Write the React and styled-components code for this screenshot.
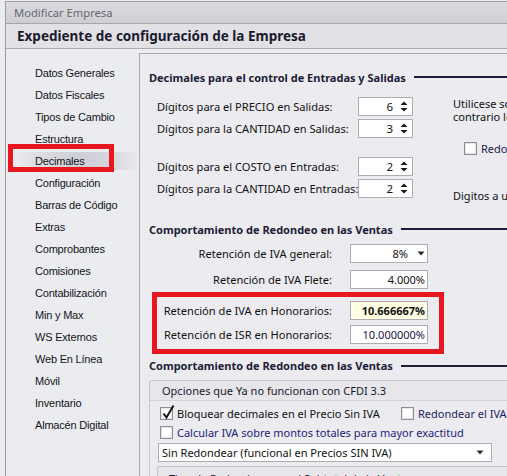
import React from 'react'
import styled, { createGlobalStyle } from 'styled-components'

const UI = "'Noto Sans', 'Liberation Sans', sans-serif"
const NAV = "'Liberation Sans', Arial, sans-serif"

const navItems = [
  'Datos Generales',
  'Datos Fiscales',
  'Tipos de Cambio',
  'Estructura',
  'Decimales',
  'Configuración',
  'Barras de Código',
  'Extras',
  'Comprobantes',
  'Comisiones',
  'Contabilización',
  'Min y Max',
  'WS Externos',
  'Web En Línea',
  'Móvil',
  'Inventario',
  'Almacén Digital',
]

const digitGroups = [
  [
    { label: 'Dígitos para el PRECIO en Salidas:', value: 6 },
    { label: 'Dígitos para la CANTIDAD en Salidas:', value: 3 },
  ],
  [
    { label: 'Dígitos para el COSTO en Entradas:', value: 2 },
    { label: 'Dígitos para la CANTIDAD en Entradas:', value: 2 },
  ],
]

const SpinArrows = () => (
  <svg width="8" height="13" viewBox="0 0 8 13">
    <polygon points="0.5,5 4,1.5 7.5,5" fill="#1a1a1a" />
    <polygon points="0.5,8 7.5,8 4,11.5" fill="#1a1a1a" />
  </svg>
)

const DropArrow = () => (
  <svg width="8" height="5" viewBox="0 0 8 5">
    <polygon points="0.5,0.5 7.5,0.5 4,4.5" fill="#2a2a2a" />
  </svg>
)

const Check = () => (
  <svg width="14" height="16" viewBox="0 0 14 16">
    <path d="M2.5 9.5 L5.5 13.5 L12.5 1.5" fill="none" stroke="#111" strokeWidth="1.9" />
  </svg>
)

const App = () => (
  <>
    <GlobalStyle />
    <Desktop>
      <Window>
        <TitleBar>Modificar Empresa</TitleBar>
        <Header>Expediente de configuración de la Empresa</Header>
        <Body>
          <Sidebar>
            {navItems.map(item => (
              <NavItem key={item} selected={item === 'Decimales'}>
                {item}
              </NavItem>
            ))}
          </Sidebar>

          <Panel>
            <SectionTitle top={14}>
              Decimales para el control de Entradas y Salidas
            </SectionTitle>
            <DecimalsGrid>
              <DigitsColumn>
                {digitGroups.map((group, i) => (
                  <DigitGroup key={i}>
                    {group.map(row => (
                      <DigitRow key={row.label}>
                        <DigitLabel>{row.label}</DigitLabel>
                        <SpinBox>
                          <SpinValue>{row.value}</SpinValue>
                          <SpinArrows />
                        </SpinBox>
                      </DigitRow>
                    ))}
                  </DigitGroup>
                ))}
              </DigitsColumn>
              <SideNote>
                <NoteLine>Utilicese solo si su operación lo requiere, de lo</NoteLine>
                <NoteLine>contrario los importes se calcularán con 2 decimales</NoteLine>
                <NoteCheck>
                  <CheckBox />
                  <span>Redondear importes</span>
                </NoteCheck>
                <NoteLine spaced>Digitos a utilizar en los reportes</NoteLine>
              </SideNote>
            </DecimalsGrid>

            <SectionTitle top={21}>Comportamiento de Redondeo en las Ventas</SectionTitle>
            <RetentionList>
              <ValueRow>
                <ValueLabel width={183}>Retención de IVA general:</ValueLabel>
                <ValueBox>
                  <ComboValue>8%</ComboValue>
                  <DropArrow />
                </ValueBox>
              </ValueRow>
              <ValueRow>
                <ValueLabel width={183}>Retención de IVA Flete:</ValueLabel>
                <ValueBox>4.000%</ValueBox>
              </ValueRow>
            </RetentionList>
            <Highlight>
              <ValueRow>
                <ValueLabel width={175}>Retención de IVA en Honorarios:</ValueLabel>
                <ValueBox active>10.666667%</ValueBox>
              </ValueRow>
              <ValueRow>
                <ValueLabel width={175}>Retención de ISR en Honorarios:</ValueLabel>
                <ValueBox tone="#24124a">10.000000%</ValueBox>
              </ValueRow>
            </Highlight>

            <SectionTitle top={3}>Comportamiento de Redondeo en las Ventas</SectionTitle>
            <GroupBox>
              <GroupHeader>Opciones que Ya no funcionan con CFDI 3.3</GroupHeader>
              <GroupBody>
                <OptionLine>
                  <Option width={241}>
                    <CheckBox>
                      <Check />
                    </CheckBox>
                    <span>Bloquear decimales en el Precio Sin IVA</span>
                  </Option>
                  <Option tone="#1e1e60">
                    <CheckBox />
                    <span>Redondear el IVA</span>
                  </Option>
                </OptionLine>
                <OptionLine>
                  <Option tone="#1d1d7e">
                    <CheckBox />
                    <span>Calcular IVA sobre montos totales para mayor exactitud</span>
                  </Option>
                </OptionLine>
                <WideCombo>
                  <span>Sin Redondear (funcional en Precios SIN IVA)</span>
                  <DropArrow />
                </WideCombo>
                <SubGroup>
                  <SubHeader>Tipo de Redondeo para el Subtotal de la Venta</SubHeader>
                </SubGroup>
              </GroupBody>
            </GroupBox>
          </Panel>
        </Body>
      </Window>
    </Desktop>
  </>
)

const GlobalStyle = createGlobalStyle`
  html, body {
    margin: 0;
    padding: 0;
  }
  body {
    background: #e9e9ec;
    font-family: ${UI};
    color: #111;
  }
`

const Desktop = styled.div`
  width: 507px;
  height: 476px;
  overflow: hidden;
  box-sizing: border-box;
  padding: 1px 0 0 5px;
  background: #ececee;
`

const Window = styled.div`
  width: 600px;
  height: 475px;
  display: flex;
  flex-direction: column;
  background: #ebebf0;
  border-top: 1px solid #9e9ea6;
  border-left: 1px solid #9a9aa2;
`

const TitleBar = styled.div`
  height: 21px;
  line-height: 21px;
  padding-left: 8px;
  font-size: 11.2px;
  color: #686875;
  background: linear-gradient(#dcdce0, #cdcdd2);
  border-bottom: 1px solid #a6a6ae;
`

const Header = styled.div`
  height: 24px;
  line-height: 24px;
  padding-left: 11px;
  font-size: 13.5px;
  font-weight: 700;
  color: #1b1b30;
  background: #e1e1e6;
  border-bottom: 1px solid #aaaab2;
`

const Body = styled.div`
  flex: 1;
  display: flex;
  padding-top: 4px;
  background: #ededf1;
  min-height: 0;
`

const Sidebar = styled.div`
  width: 133px;
  flex-shrink: 0;
  padding-top: 9px;
  background: #ebecf0;
`

const NavItem = styled.div`
  position: relative;
  height: 22px;
  line-height: 22px;
  padding-left: 29px;
  font-family: ${NAV};
  font-size: 11px;
  letter-spacing: -0.2px;
  color: #141420;
  background: ${p =>
    p.selected
      ? 'linear-gradient(90deg, rgba(210,211,218,0) 6px, #dedfe4 22%, #cecfd6 55%, #d6d7dd 80%, rgba(210,211,218,0) 100%)'
      : 'none'};
  background-size: 100% 18px;
  background-position: 0 2px;
  background-repeat: no-repeat;

  &::after {
    content: '';
    display: ${p => (p.selected ? 'block' : 'none')};
    position: absolute;
    left: 2px;
    top: -6px;
    width: 106px;
    height: 28px;
    box-sizing: border-box;
    border: 5px solid #e8161f;
  }
`

const Panel = styled.div`
  flex: 1;
  display: flex;
  flex-direction: column;
  padding-left: 9px;
  background: #ebebf0;
  border-top: 1px solid #a9a9b1;
  border-left: 1px solid #a9a9b1;
`

const SectionTitle = styled.div`
  display: flex;
  align-items: center;
  gap: 8px;
  height: 18px;
  flex-shrink: 0;
  margin-top: ${p => p.top}px;
  font-size: 11px;
  font-weight: 700;
  color: #1c1c36;
  white-space: nowrap;

  &::after {
    content: '';
    flex: 1;
    height: 2px;
    background: #1d1d3b;
  }
`

const DecimalsGrid = styled.div`
  display: flex;
  align-items: flex-start;
  flex-shrink: 0;
  height: 104px;
  margin-top: 9px;
`

const DigitsColumn = styled.div`
  width: 296px;
  flex-shrink: 0;
  padding-left: 8px;
  display: flex;
  flex-direction: column;
  gap: 16px;
`

const DigitGroup = styled.div`
  display: flex;
  flex-direction: column;
`

const DigitRow = styled.div`
  display: flex;
  align-items: center;
  height: 22px;
`

const DigitLabel = styled.div`
  width: 201px;
  font-size: 11.1px;
  white-space: nowrap;
`

const SpinBox = styled.div`
  width: 55px;
  height: 19px;
  box-sizing: border-box;
  display: flex;
  align-items: center;
  justify-content: flex-end;
  padding-right: 4px;
  background: #fff;
  border: 1px solid #abadb3;
`

const SpinValue = styled.span`
  font-size: 11.5px;
  margin-right: 7px;
`

const SideNote = styled.div`
  padding-top: 1.5px;
  font-size: 11px;
  white-space: nowrap;
`

const NoteLine = styled.div`
  line-height: 13px;
  margin-top: ${p => (p.spaced ? '34px' : '0')};
`

const NoteCheck = styled.div`
  display: flex;
  align-items: center;
  gap: 4px;
  height: 13px;
  margin: 19.5px 0 0 11px;
  color: #20204a;
`

const CheckBox = styled.span`
  position: relative;
  width: 13px;
  height: 13px;
  flex-shrink: 0;
  box-sizing: border-box;
  background: #fff;
  border: 1px solid #8d8d94;
  box-shadow: inset 0 0 0 1px #e6e6ea;

  svg {
    position: absolute;
    left: 0;
    top: -4px;
  }
`

const RetentionList = styled.div`
  display: flex;
  flex-direction: column;
  flex-shrink: 0;
  gap: 7.5px;
  margin-top: 5.5px;
`

const ValueRow = styled.div`
  display: flex;
  align-items: center;
  height: 19px;
`

const ValueLabel = styled.div`
  width: ${p => p.width}px;
  margin-right: 18px;
  text-align: right;
  font-size: 11.1px;
  white-space: nowrap;
`

const ValueBox = styled.div`
  width: 78px;
  height: 19px;
  box-sizing: border-box;
  display: flex;
  align-items: center;
  justify-content: flex-end;
  padding-right: 2px;
  font-size: 11px;
  font-weight: ${p => (p.active ? 700 : 400)};
  color: ${p => p.tone || '#111'};
  background: ${p => (p.active ? '#ffffe3' : '#fff')};
  border: 1px solid #abadb3;
`

const ComboValue = styled.span`
  margin-right: 9px;
`

const Highlight = styled.div`
  width: 292px;
  flex-shrink: 0;
  box-sizing: border-box;
  margin: 3px 0 0 3px;
  padding: 3.5px 11px 5px 0;
  display: flex;
  flex-direction: column;
  gap: 5px;
  border: 5px solid #e8161f;
`

const GroupBox = styled.div`
  flex-shrink: 0;
  margin-top: 5.5px;
  border: 1px solid #c5c5ce;
  border-right: none;
  border-radius: 3px 0 0 0;
`

const GroupHeader = styled.div`
  height: 19px;
  line-height: 19px;
  padding-left: 12px;
  font-size: 11px;
  color: #1a1a2a;
  background: #e6e6eb;
  border-bottom: 1px solid #d2d2da;
  white-space: nowrap;
`

const GroupBody = styled.div`
  padding: 5px 0 0 10px;
`

const OptionLine = styled.div`
  display: flex;
  align-items: center;
  height: 15px;
  margin-bottom: 4px;
`

const Option = styled.label`
  display: flex;
  align-items: center;
  gap: 4px;
  width: ${p => (p.width ? `${p.width}px` : 'auto')};
  font-size: 11px;
  color: ${p => p.tone || '#111'};
  white-space: nowrap;
`

const WideCombo = styled.div`
  width: 334px;
  height: 19px;
  box-sizing: border-box;
  margin: -1.5px 0 0 -2px;
  display: flex;
  align-items: center;
  justify-content: space-between;
  padding: 0 7px 0 3px;
  font-size: 11px;
  background: #fff;
  border: 1px solid #abadb3;
`

const SubGroup = styled.div`
  margin: 4px 0 0 -3px;
  border: 1px solid #c5c5ce;
  border-right: none;
  border-radius: 3px 0 0 0;
  background: #e6e6eb;
`

const SubHeader = styled.div`
  height: 24px;
  line-height: 24px;
  padding: 0 0 0 11px;
  font-size: 11px;
  color: #1a1a2a;
  white-space: nowrap;
`

export default App
